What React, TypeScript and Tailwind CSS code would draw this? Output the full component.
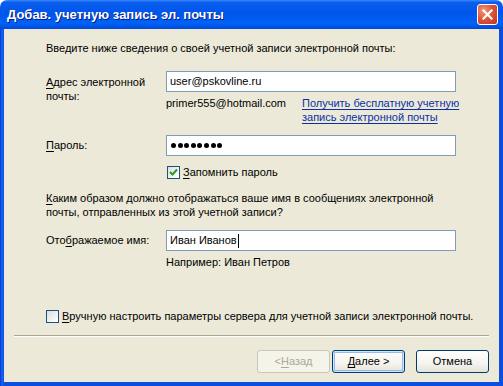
import React from 'react';

const font = { fontFamily: '"Liberation Sans", "DejaVu Sans", sans-serif' };

function U({ children }: { children: React.ReactNode }) {
  return <span className="underline underline-offset-[2px]">{children}</span>;
}

function TextBox({ value, caret = false }: { value: string; caret?: boolean }) {
  return (
    <div className="flex-1 h-[21px] border border-[#7f9db9] bg-white flex items-center pl-[3px] text-[11px] text-black">
      <span>{value}</span>
      {caret && <span className="w-px h-[14px] bg-black ml-px" />}
    </div>
  );
}

function PasswordBox({ count }: { count: number }) {
  return (
    <div className="flex-1 h-[21px] border border-[#7f9db9] bg-white flex items-center pl-[4px] gap-[1.6px]">
      {Array.from({ length: count }).map((_, i) => (
        <span key={i} className="w-[5px] h-[5px] rounded-full bg-black" />
      ))}
    </div>
  );
}

function CheckBox({ checked }: { checked: boolean }) {
  return (
    <div className="w-[13px] h-[13px] border border-[#1c5180] bg-[linear-gradient(135deg,#dcdcd7_0%,#ffffff_90%)] flex items-center justify-center shrink-0">
      {checked && (
        <svg width="9" height="9" viewBox="0 0 9 9">
          <path d="M1 4 L3.5 6.5 L8 1.5" fill="none" stroke="#21a121" strokeWidth="2" />
        </svg>
      )}
    </div>
  );
}

function XpButton({ children, disabled = false, isDefault = false }: { children: React.ReactNode; disabled?: boolean; isDefault?: boolean }) {
  return (
    <div
      className={
        'w-[73px] h-[23px] rounded-[3px] border flex items-center justify-center text-[11px] ' +
        (disabled
          ? 'border-[#c9c7ba] bg-[#f5f4ea] text-[#aca899]'
          : 'border-[#003c74] text-black bg-[linear-gradient(to_bottom,#ffffff_0%,#f4f3ee_60%,#e3e2da_100%)]') +
        (isDefault ? ' shadow-[inset_0_0_0_1px_#cee7ff,inset_0_0_0_2px_#98b8ea]' : '')
      }
    >
      {children}
    </div>
  );
}

export default function App() {
  return (
    <div className="w-[503px] h-[386px] flex flex-col bg-white text-black text-[11px] overflow-hidden" style={font}>
      <div className="h-[29px] shrink-0 rounded-t-[7px] bg-[linear-gradient(to_bottom,#3d8bff_0%,#0a5fef_8%,#0055ea_45%,#0062f7_80%,#0049d8_100%)] flex items-center pl-[7px] pr-[4px]">
        <span className="text-white font-bold text-[13px] [text-shadow:1px_1px_0_#0a1883] flex-1 mt-[1px]">
          Добав. учетную запись эл. почты
        </span>
        <div className="w-[21px] h-[21px] rounded-[3px] border border-white bg-[radial-gradient(circle_at_30%_30%,#f09a7a_0%,#e0553a_45%,#c1351b_100%)] flex items-center justify-center mr-px">
          <svg width="11" height="11" viewBox="0 0 11 11">
            <path d="M1.5 1.5 L9.5 9.5 M9.5 1.5 L1.5 9.5" stroke="white" strokeWidth="2.2" strokeLinecap="square" />
          </svg>
        </div>
      </div>

      <div className="flex-1 min-h-0 flex bg-[linear-gradient(to_right,#0831d9_0px,#166aee_2px,#0a4fe0_4px)]">
        <div className="flex-1 min-w-0 flex flex-col bg-[#ece9d8] mx-[4px] mb-[4px]">
          <div className="flex flex-col pl-[42px] pr-[43px]">
            <p className="mt-[12px] leading-[14px]">Введите ниже сведения о своей учетной записи электронной почты:</p>

            <div className="flex mt-[16px] h-[21px]">
              <div className="w-[120px] h-[21px] leading-[14px] pt-[4px]">
                <U>А</U>дрес электронной почты:
              </div>
              <TextBox value="user@pskovline.ru" />
            </div>

            <div className="flex mt-[4px] ml-[120px] mr-[-20px] leading-[14px]">
              <span className="w-[136px] shrink-0">primer555@hotmail.com</span>
              <span className="text-[#0a30a8] underline underline-offset-[2px] w-[164px] shrink-0">
                Получить бесплатную учетную запись электронной почты
              </span>
            </div>

            <div className="flex items-center mt-[11px]">
              <div className="w-[120px]">
                <U>П</U>ароль:
              </div>
              <PasswordBox count={8} />
            </div>

            <div className="flex items-center gap-[3px] mt-[10px] ml-[121px] h-[13px]">
              <CheckBox checked />
              <span>
                <U>З</U>апомнить пароль
              </span>
            </div>

            <p className="mt-[12px] leading-[14px]">
              <U>К</U>аким образом должно отображаться ваше имя в сообщениях электронной почты, отправленных из этой учетной записи?
            </p>

            <div className="flex items-center mt-[11px]">
              <div className="w-[120px]">
                Ото<U>б</U>ражаемое имя:
              </div>
              <TextBox value="Иван Иванов" caret />
            </div>

            <p className="mt-[4px] ml-[120px] leading-[14px]">Например: Иван Петров</p>

            <div className="flex items-center gap-[3px] mt-[41px] mr-[-40px] h-[13px]">
              <CheckBox checked={false} />
              <span>
                <U>В</U>ручную настроить параметры сервера для учетной записи электронной почты.
              </span>
            </div>
          </div>

          <div className="mt-auto mx-[10px] border-t border-[#aca899] border-b border-b-white" />
          <div className="flex justify-end items-center mt-[13px] mb-[9px] pr-[10px]">
            <XpButton disabled>
              &lt; <U>Н</U>азад
            </XpButton>
            <div className="ml-[2px]">
              <XpButton isDefault>
                <U>Д</U>алее &gt;
              </XpButton>
            </div>
            <div className="ml-[11px]">
              <XpButton>Отмена</XpButton>
            </div>
          </div>
        </div>
      </div>
    </div>
  );
}
